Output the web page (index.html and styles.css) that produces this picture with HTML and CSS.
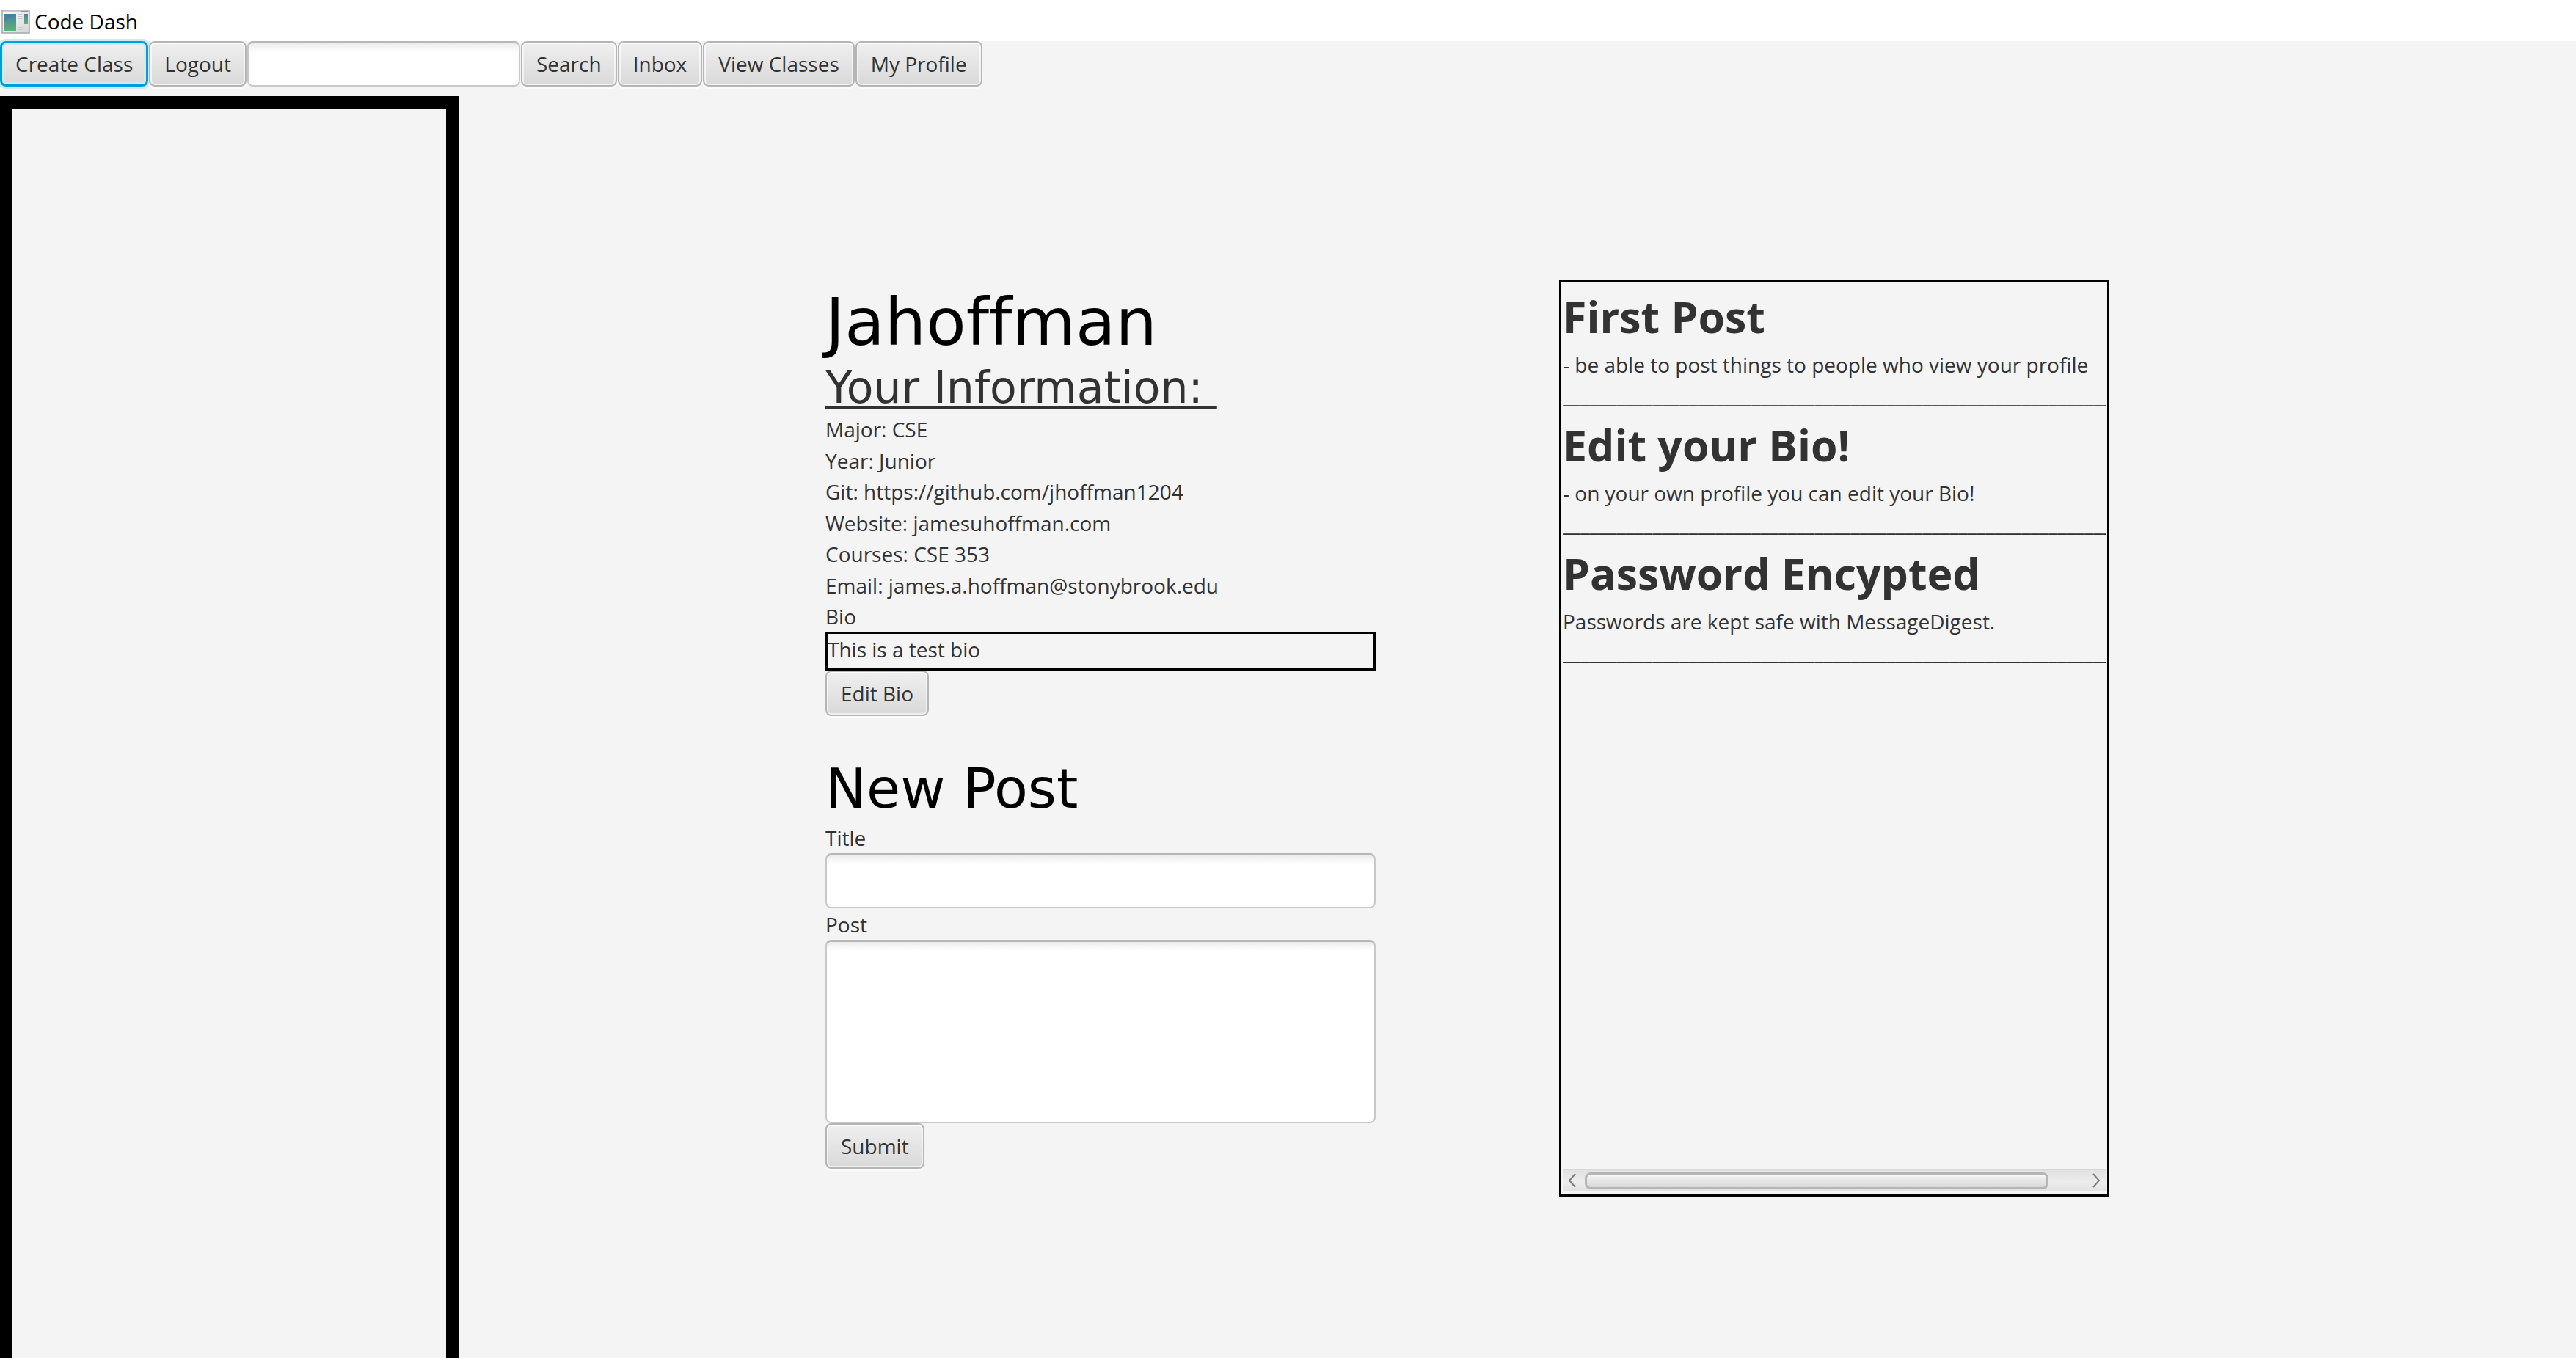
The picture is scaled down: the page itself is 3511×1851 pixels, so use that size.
FILE: index.html
```html
<!DOCTYPE html>
<html lang="en">
<head>
<meta charset="utf-8">
<title>Code Dash</title>
<link rel="stylesheet" href="styles.css">
</head>
<body>
<div class="window">
  <header class="titlebar">
    <svg class="app-icon" viewBox="0 0 39 33" preserveAspectRatio="none" aria-hidden="true">
      <defs>
        <linearGradient id="frame" x1="0" y1="0" x2="1" y2="1"><stop offset="0" stop-color="#fff"/><stop offset="1" stop-color="#d4d4d4"/></linearGradient>
        <linearGradient id="pane" x1="0" y1="0" x2="0" y2="1"><stop offset="0" stop-color="#4a80a4"/><stop offset="1" stop-color="#5cb377"/></linearGradient>
      </defs>
      <rect x="1" y="1" width="37" height="31" fill="url(#frame)" stroke="#a3a8ad" stroke-width="1.5"/>
      <path d="M2 2.500H37" stroke="#c5ccd4" stroke-width="2"/>
      <path d="M27 2.500H36" stroke="#8b95a0" stroke-width="1"/>
      <rect x="3" y="6" width="17" height="23" fill="url(#pane)"/>
      <path d="M3 18Q8 11 20 9V6H3Z" fill="#4a7f9f" opacity=".6"/>
      <path d="M22.500 6.500h6M22.500 9.500h6M22.500 12.500h6M22.500 15.500h6M22.500 18.500h6M22.500 24.500h6M22.500 27.500h6" stroke="#c9c9c9" stroke-width="1"/>
      <rect x="31" y="6" width="5" height="14" fill="url(#pane)"/>
    </svg>
    <span class="app-title">Code Dash</span>
  </header>
  <nav class="toolbar">
    <button class="btn btn-focused" type="button">Create Class</button>
    <button class="btn" type="button">Logout</button>
    <input class="field search-field" type="text" aria-label="Search">
    <button class="btn" type="button">Search</button>
    <button class="btn" type="button">Inbox</button>
    <button class="btn" type="button">View Classes</button>
    <button class="btn" type="button">My Profile</button>
  </nav>
  <main class="content">
    <aside class="sidebar"></aside>
    <section class="profile">
      <h1 class="name">Jahoffman</h1>
      <h2 class="info-title">Your Information: </h2>
      <ul class="info">
        <li>Major: CSE</li>
        <li>Year: Junior</li>
        <li>Git: https://github.com/jhoffman1204</li>
        <li>Website: jamesuhoffman.com</li>
        <li>Courses: CSE 353</li>
        <li>Email: james.a.hoffman@stonybrook.edu</li>
        <li>Bio</li>
      </ul>
      <p class="bio">This is a test bio</p>
      <button class="btn" type="button">Edit Bio</button>
      <form class="new-post">
        <h2 class="form-title">New Post</h2>
        <label class="label" for="post-title">Title</label>
        <input class="field title-field" id="post-title" type="text">
        <label class="label" for="post-body">Post</label>
        <textarea class="field body-field" id="post-body"></textarea>
        <button class="btn" type="button">Submit</button>
      </form>
    </section>
    <section class="feed">
      <div class="posts">
        <article class="post">
          <h3 class="post-title">First Post</h3>
          <p class="post-text">- be able to post things to people who view your profile</p>
          <p class="post-rule">________________________________________________________________</p>
        </article>
        <article class="post">
          <h3 class="post-title">Edit your Bio!</h3>
          <p class="post-text">- on your own profile you can edit your Bio!</p>
          <p class="post-rule">________________________________________________________________</p>
        </article>
        <article class="post">
          <h3 class="post-title">Password Encypted</h3>
          <p class="post-text">Passwords are kept safe with MessageDigest.</p>
          <p class="post-rule">________________________________________________________________</p>
        </article>
      </div>
      <div class="scrollbar">
        <button class="arrow" type="button" aria-label="Scroll left"><svg viewBox="0 0 12 20"><path d="M10 1L2 10L10 19" fill="none" stroke="#7d7d7d" stroke-width="2"/></svg></button>
        <div class="track"><div class="thumb"></div></div>
        <button class="arrow" type="button" aria-label="Scroll right"><svg viewBox="0 0 12 20"><path d="M2 1L10 10L2 19" fill="none" stroke="#7d7d7d" stroke-width="2"/></svg></button>
      </div>
    </section>
  </main>
</div>
</body>
</html>
```
FILE: styles.css
```css
* { box-sizing: border-box; }

body {
  margin: 0;
  background: #f4f4f4;
  color: #323232;
  font: 28px/42px "Open Sans", "Noto Sans", sans-serif;
}

h1, h2, h3, p, ul { margin: 0; padding: 0; font-weight: 400; }

.window {
  display: flex;
  flex-direction: column;
  height: 100vh;
  min-height: 1640px;
  overflow: hidden;
}

.titlebar {
  display: flex;
  align-items: center;
  gap: 6px;
  height: 56px;
  padding: 2px 0 0 2px;
  background: #fff;
  color: #000;
}

.app-icon { width: 39px; height: 33px; }

.toolbar {
  display: flex;
  gap: 1px;
  height: 75px;
}

.btn {
  height: 62px;
  padding: 0 19px;
  border: 2px solid #b5b5b5;
  border-radius: 8px;
  background: linear-gradient(#efefef, #d9d9d9);
  box-shadow: inset 0 0 0 2px rgba(255, 255, 255, .6), inset 0 2px 0 #fff, 0 3px 0 #fbfbfb;
  color: #323232;
  font: inherit;
  white-space: nowrap;
}

.btn-focused {
  border: 3px solid #039ed3;
  padding: 0 18px;
  box-shadow: inset 0 0 0 3px #d3e9f1, 0 0 0 3px #cfe8f2;
}

.field {
  display: block;
  width: 100%;
  padding: 8px 16px;
  border: 2px solid #c8c8c8;
  border-top: 3px solid #b8b8b8;
  border-radius: 8px;
  background: linear-gradient(#ececec, #fff 12px);
  color: #323232;
  font: inherit;
  resize: none;
}

.search-field { width: 372px; height: 62px; }
.title-field { height: 75px; margin-bottom: 1px; }
.body-field { height: 250px; }

.content {
  display: grid;
  grid-template-columns: 625fr 500fr 750fr 250fr 750fr 636fr;
  flex: 1;
}

.sidebar {
  grid-column: 1;
  border: 17px solid #000;
  border-bottom: 0;
}

.profile { grid-column: 3; min-width: 0; padding-top: 250px; }

.name {
  color: #000;
  font: 89px/116px "DejaVu Sans", sans-serif;
  font-variant-ligatures: none;
}

.info-title {
  width: max-content;
  margin-bottom: 5px;
  font: 60px/62px "DejaVu Sans", sans-serif;
  text-decoration: underline 4px;
  text-underline-offset: 5px;
  text-decoration-skip-ink: none;
  white-space: pre;
}

.info {
  display: flex;
  flex-direction: column;
  justify-content: space-between;
  min-height: 297px;
  list-style: none;
}

.bio {
  padding-bottom: 5px;
  border: 3px solid #000;
}

.new-post { margin-top: 53px; }

.form-title {
  color: #000;
  font: 75px/92px "DejaVu Sans", sans-serif;
}

.label { display: block; }

.feed {
  grid-column: 5;
  display: flex;
  flex-direction: column;
  align-self: start;
  min-width: 0;
  height: 1250px;
  margin-top: 250px;
  padding: 2px 2px 5px;
  border: 3px solid #000;
}

.posts { flex: 1; overflow: hidden; }

.post { height: 175px; white-space: nowrap; }

.post-title { font: 700 59px/90px "Open Sans", "Noto Sans", sans-serif; }

.scrollbar {
  display: flex;
  align-items: center;
  height: 30px;
  border-top: 2px solid #d8d8d8;
  background: linear-gradient(#e2e2e2, #ececec 60%, #e2e2e2);
}

.arrow {
  flex: none;
  display: flex;
  align-items: center;
  justify-content: center;
  width: 30px;
  padding: 0 4px 0 0;
  border: 0;
  background: none;
}

.arrow:last-child { padding: 0 0 0 4px; }

.arrow svg { width: 12px; height: 20px; }

.track { flex: 1; }

.thumb {
  width: 93%;
  height: 23px;
  border: 3px solid #b5b5b5;
  border-radius: 8px;
  background: linear-gradient(#fff, #efefef 3px, #d9d9d9);
}
```
